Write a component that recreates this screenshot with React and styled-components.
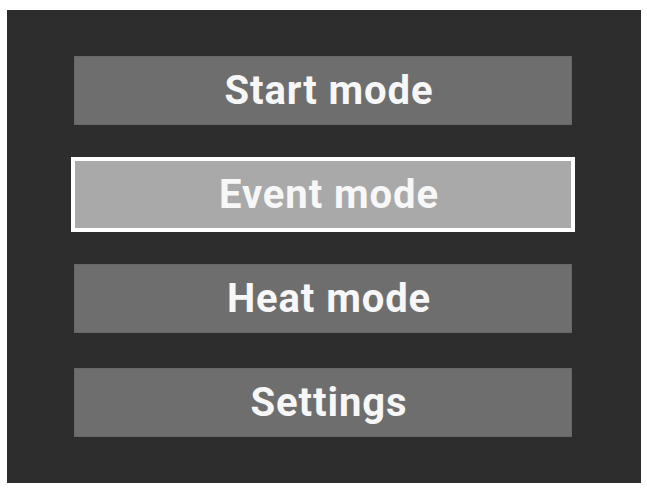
import React from "react";
import styled, { createGlobalStyle } from "styled-components";

const Global = createGlobalStyle`
  html, body { margin: 0; padding: 0; background: #ffffff; }
  body { font-family: Roboto, "Liberation Sans", sans-serif; }
`;

const Panel = styled.div`
  margin: 10px 6px 8px 7px;
  height: 473px;
  background: #2d2d2d;
  box-sizing: border-box;
  padding: 46px 0 0 67px;
  display: flex;
  flex-direction: column;
  gap: 35px;
`;

const MenuButton = styled.div`
  width: 498px;
  height: 69px;
  box-sizing: border-box;
  background: ${(p) => (p.$selected ? "#a9a9a9" : "#6e6e6e")};
  border: 1px solid ${(p) => (p.$selected ? "#a9a9a9" : "#676767")};
  outline: ${(p) => (p.$selected ? "4px solid #ffffff" : "none")};
  outline-offset: -1px;
  display: flex;
  align-items: center;
  justify-content: center;
  padding-left: 12px;
  color: #f7f7f7;
  font-family: Roboto, "Liberation Sans", sans-serif;
  font-weight: 700;
  font-size: 40px;
  letter-spacing: 0.9px;
`;

const items = ["Start mode", "Event mode", "Heat mode", "Settings"];

export default function App() {
  return (
    <>
      <Global />
      <Panel>
        {items.map((t, i) => (
          <MenuButton key={t} $selected={i === 1}>
            {t}
          </MenuButton>
        ))}
      </Panel>
    </>
  );
}
